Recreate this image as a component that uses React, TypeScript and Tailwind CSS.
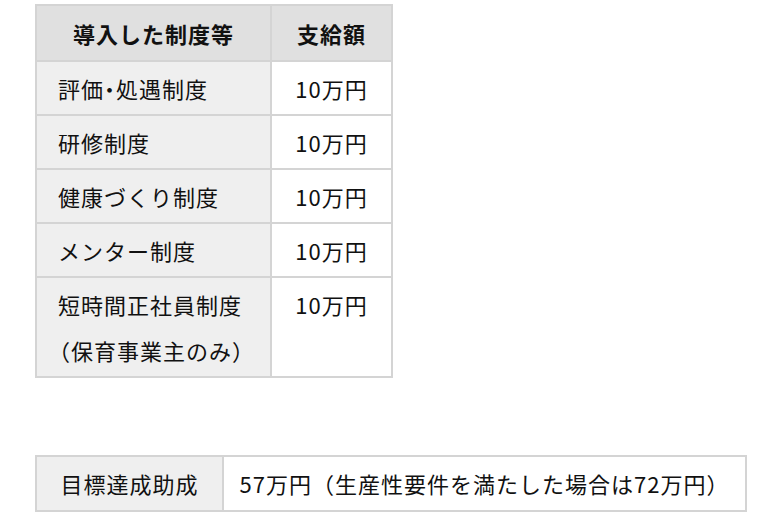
import React from "react";

const rows = [
  { name: ["評価", "・", "処遇制度"], amount: "10万円" },
  { name: ["研修制度"], amount: "10万円" },
  { name: ["健康づくり制度"], amount: "10万円" },
  { name: ["メンター制度"], amount: "10万円" },
];

export default function App() {
  return (
    <div
      className="min-h-[516px] w-[773px] bg-white pl-[35px] pt-[4px] text-[22px] tracking-[1px] text-[#111]"
      style={{ fontFamily: '"Noto Sans CJK JP", "Noto Sans", sans-serif' }}
    >
      {/* 制度ごとの支給額 */}
      <table className="w-[358px] border-collapse">
        <thead>
          <tr className="h-[56px] bg-[#e0e0e0]">
            <th className="w-[235px] border-2 border-[#d4d4d4] text-center font-bold leading-[44px]">
              導入した制度等
            </th>
            <th className="border-2 border-[#d4d4d4] text-center font-bold leading-[44px]">
              支給額
            </th>
          </tr>
        </thead>
        <tbody>
          {rows.map((row, i) => (
            <tr key={i} className="h-[54px]">
              <td className="border-2 border-[#d4d4d4] bg-[#efefef] py-[3px] pl-[21px] align-top leading-[46px]">
                {row.name.map((part, j) =>
                  part === "・" ? (
                    <span key={j} className="[font-feature-settings:'palt']">
                      {part}
                    </span>
                  ) : (
                    <span key={j}>{part}</span>
                  )
                )}
              </td>
              <td className="border-2 border-[#d4d4d4] bg-white py-[3px] text-center align-top leading-[46px]">
                {row.amount}
              </td>
            </tr>
          ))}
          <tr className="h-[94px]">
            <td className="border-2 border-[#d4d4d4] bg-[#efefef] py-[3px] pl-[21px] align-top leading-[46px]">
              <div>短時間正社員制度</div>
              <div className="-ml-[10px]">（保育事業主のみ）</div>
            </td>
            <td className="border-2 border-[#d4d4d4] bg-white py-[3px] text-center align-top leading-[46px]">
              10万円
            </td>
          </tr>
        </tbody>
      </table>

      {/* 目標達成助成 */}
      <table className="mt-[77px] w-[712px] border-collapse">
        <tbody>
          <tr className="h-[55px]">
            <td className="w-[187px] border-2 border-[#d4d4d4] bg-[#efefef] text-center">
              目標達成助成
            </td>
            <td className="border-2 border-[#d4d4d4] bg-white text-center">
              57万円（生産性要件を満たした場合は72万円）
            </td>
          </tr>
        </tbody>
      </table>
    </div>
  );
}
